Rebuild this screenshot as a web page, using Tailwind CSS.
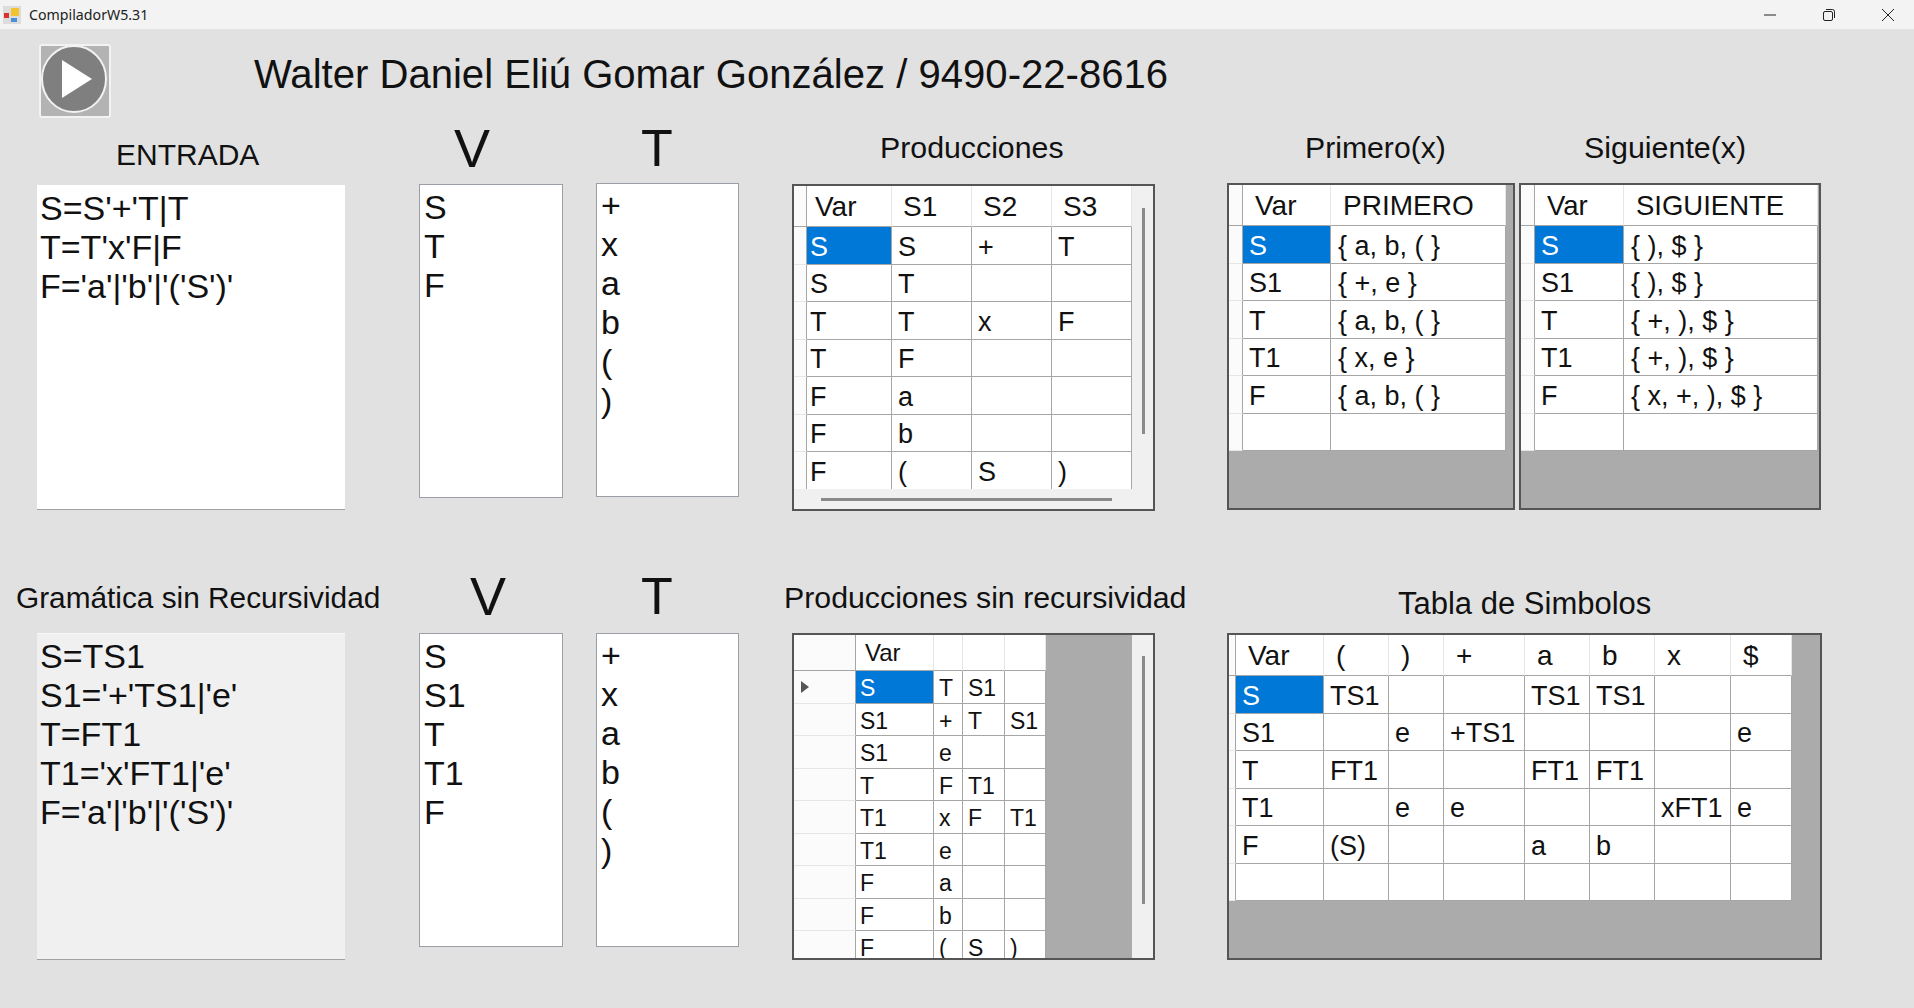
<!DOCTYPE html>
<html lang="es">
<head>
  <meta charset="UTF-8">
  <title>CompiladorW5.31</title>
  <script src="https://cdn.jsdelivr.net/npm/@tailwindcss/browser@4"></script>
</head>
<body class="bg-[#e1e1e1] w-[1914px] h-[1008px] overflow-hidden font-['Liberation_Sans',sans-serif] text-[#111]">

  <!-- barra de titulo -->
  <div class="h-[29px] bg-[#f3f3f3] flex items-center">
    <svg class="ml-[3px]" width="18" height="18" viewBox="0 0 18 18">
      <rect width="18" height="18" fill="#dcdcdc"/>
      <rect x="1" y="7" width="5" height="5" fill="#d8322a"/>
      <rect x="8" y="2" width="8" height="8" fill="#f4c430"/>
      <rect x="8" y="12" width="6" height="4" fill="#4a90d9"/>
    </svg>
    <span class="ml-[8px] text-[14.2px] font-['Noto_Sans',sans-serif] text-[#222]">CompiladorW5.31</span>
    <div class="ml-auto flex items-center mr-[20px] gap-[47px]">
      <svg width="12" height="12" viewBox="0 0 12 12"><path d="M0 6h12" stroke="#222" stroke-width="1"/></svg>
      <svg width="12" height="12" viewBox="0 0 12 12" fill="none" stroke="#222" stroke-width="1"><rect x="0.5" y="2.5" width="9" height="9" rx="1.5"/><path d="M3 0.5h6.5a2 2 0 0 1 2 2V9"/></svg>
      <svg width="12" height="12" viewBox="0 0 12 12" fill="none" stroke="#222" stroke-width="1"><path d="M0 0l12 12M12 0L0 12"/></svg>
    </div>
  </div>

  <!-- boton y nombre -->
  <div class="h-[91px] flex items-start pl-[39px] pt-[15px]">
    <button class="w-[72px] h-[74px] rounded-[3px] border-2 border-[#f2f2f2] bg-[#b3b3b3] overflow-hidden">
      <svg width="68" height="70" viewBox="0 0 68 70" class="block">
        <ellipse cx="33" cy="33" rx="32" ry="33" fill="#7f7f7f" stroke="#f2f2f2" stroke-width="2"/>
        <path d="M21 14L51 33L21 52Z" fill="#fff"/>
      </svg>
    </button>
    <h1 class="ml-[143px] text-[40.1px] leading-[60px] text-[#111]">Walter Daniel Eliú Gomar González / 9490-22-8616</h1>
  </div>

  <!-- fila superior -->
  <div class="flex items-start h-[440px]">
    <section class="ml-[37px] w-[308px]">
      <h2 class="h-[65px] pl-[79px] text-[30px] leading-[70px]">ENTRADA</h2>
      <div class="h-[325px] bg-white border-b border-[#a0a0a0] pl-[3px] pt-[4px] text-[34px] leading-[39px]">
        <p>S=S'+'T|T</p><p>T=T'x'F|F</p><p>F='a'|'b'|'('S')'</p>
      </div>
    </section>
    <section class="ml-[74px] w-[144px]">
      <h2 class="h-[64px] pl-[35px] text-[54px] leading-[56px]">V</h2>
      <div class="h-[314px] bg-white border border-[#9a9fa6] pl-[4px] pt-[3px] text-[34px] leading-[39px]">
        <p>S</p><p>T</p><p>F</p>
      </div>
    </section>
    <section class="ml-[33px] w-[143px]">
      <h2 class="h-[63px] pl-[45px] text-[52px] leading-[56px]">T</h2>
      <div class="h-[314px] bg-white border border-[#9a9fa6] pl-[4px] pt-[2px] text-[34px] leading-[39px]">
        <p>+</p><p>x</p><p>a</p><p>b</p><p>(</p><p>)</p>
      </div>
    </section>
    <section class="ml-[53px] w-[363px]">
      <h2 class="h-[64px] pl-[88px] text-[30.3px] leading-[56px] whitespace-nowrap">Producciones</h2>
      <div class="h-[327px] border-2 border-[#555] flex flex-col bg-[#f0f0f0]">
        <div class="flex flex-1 min-h-0">
          <div id="tProd" class="w-[338px] overflow-hidden bg-white"></div>
          <div class="flex-1 pl-[10px] pt-[22px]"><div class="w-[3px] h-[226px] bg-[#8a8a8a]"></div></div>
        </div>
        <div class="h-[20px] pl-[27px] pt-[9px]"><div class="w-[291px] h-[3px] bg-[#8a8a8a]"></div></div>
      </div>
    </section>
    <section class="ml-[72px] w-[288px]">
      <h2 class="h-[63px] pl-[78px] text-[30.2px] leading-[56px] whitespace-nowrap">Primero(x)</h2>
      <div id="tPrim" class="h-[327px] border-2 border-[#555] bg-[#ababab] overflow-hidden"></div>
    </section>
    <section class="ml-[4px] w-[302px]">
      <h2 class="h-[63px] pl-[65px] text-[30.4px] leading-[55px] whitespace-nowrap">Siguiente(x)</h2>
      <div id="tSig" class="h-[327px] border-2 border-[#555] bg-[#ababab] overflow-hidden"></div>
    </section>
  </div>

  <!-- fila inferior -->
  <div class="flex items-start h-[400px]">
    <section class="ml-[37px] w-[308px]">
      <h2 class="h-[73px] -ml-[21px] text-[29.8px] leading-[75px] whitespace-nowrap">Gramática sin Recursividad</h2>
      <div class="h-[327px] bg-[#f0f0f0] border-t border-[#f8f8f8] border-b-[#a0a0a0] border-b pl-[3px] pt-[3px] text-[34px] leading-[39px]">
        <p>S=TS1</p><p>S1='+'TS1|'e'</p><p>T=FT1</p><p>T1='x'FT1|'e'</p><p>F='a'|'b'|'('S')'</p>
      </div>
    </section>
    <section class="ml-[74px] w-[144px]">
      <h2 class="h-[73px] pl-[51px] text-[54px] leading-[72px]">V</h2>
      <div class="h-[314px] bg-white border border-[#9a9fa6] pl-[4px] pt-[3px] text-[34px] leading-[39px]">
        <p>S</p><p>S1</p><p>T</p><p>T1</p><p>F</p>
      </div>
    </section>
    <section class="ml-[33px] w-[143px]">
      <h2 class="h-[73px] pl-[45px] text-[52px] leading-[72px]">T</h2>
      <div class="h-[314px] bg-white border border-[#9a9fa6] pl-[4px] pt-[2px] text-[34px] leading-[39px]">
        <p>+</p><p>x</p><p>a</p><p>b</p><p>(</p><p>)</p>
      </div>
    </section>
    <section class="ml-[53px] w-[363px]">
      <h2 class="h-[73px] -ml-[8px] text-[30.3px] leading-[75px] whitespace-nowrap">Producciones sin recursividad</h2>
      <div class="h-[327px] border-2 border-[#555] flex bg-[#f0f0f0]">
        <div id="tSinRec" class="w-[338px] overflow-hidden bg-[#ababab]"></div>
        <div class="flex-1 pl-[10px] pt-[21px]"><div class="w-[3px] h-[248px] bg-[#8a8a8a]"></div></div>
      </div>
    </section>
    <section class="ml-[72px] w-[595px]">
      <h2 class="h-[73px] pl-[171px] text-[31px] leading-[88px] whitespace-nowrap">Tabla de Simbolos</h2>
      <div id="tSimb" class="h-[327px] border-2 border-[#555] bg-[#ababab] overflow-hidden"></div>
    </section>
  </div>

  <script>
    /* arma un DataGridView: ancho de fila-cabecera + columnas, filas de alto fraccional */
    function grid (id, o) {
      const cont = document.getElementById(id);
      const fila = (alto, celdas) => {
        const r = document.createElement('div');
        r.className = 'flex';
        r.style.height = alto + 'px';
        celdas.forEach(c => r.appendChild(c));
        return r;
      };
      const celda = (w, h, txt, cls, pad, font) => {
        const d = document.createElement('div');
        d.className = 'shrink-0 box-border flex items-center whitespace-nowrap overflow-hidden ' + cls;
        d.style.width = w + 'px';
        d.style.height = h + 'px';
        d.style.paddingLeft = pad + 'px';
        d.style.fontSize = font + 'px';
        d.textContent = txt;
        return d;
      };

      cont.appendChild(fila(o.headH, [
        celda(o.rowHead, o.headH, '', 'bg-[#fbfbfb] border-r border-b border-[#a6a6a6]', 0, o.font),
        ...o.head.map((t, i) =>
          celda(o.cols[i], o.headH, t, 'pt-[1px] bg-white border-r border-r-[#e6e6e6] border-b border-b-[#a6a6a6]',
                i === 0 ? o.headPad0 : o.headPad, o.headFont))
      ]));

      o.rows.forEach((row, ri) => {
        const h = Math.round((ri + 1) * o.rowH) - Math.round(ri * o.rowH);
        const cab = celda(o.rowHead, h, '', 'bg-[#fbfbfb] border-r border-r-[#a6a6a6] border-b border-b-[#e6e6e6]', 0, o.font);
        if (o.arrow && ri === 0) {
          cab.innerHTML = '<svg width="8" height="12" viewBox="0 0 8 12" class="ml-[7px]"><path d="M0 0L8 6L0 12Z" fill="#555"/></svg>';
        }
        cont.appendChild(fila(h, [cab, ...o.cols.map((w, ci) => {
          const sel = ri === 0 && ci === 0;
          return celda(w, h, row[ci] || '',
            sel ? 'pt-[3px] bg-[#0078d7] text-white border-r border-b border-[#a6a6a6]'
                : 'pt-[3px] bg-white border-r border-b border-[#a6a6a6]',
            ci === 0 ? o.cellPad0 : o.cellPad, o.font);
        })]));
      });
    }

    grid('tProd', {
      font: 27, headFont: 28, rowHead: 13, headH: 41, rowH: 37.5, headPad: 11, headPad0: 8, cellPad: 6, cellPad0: 3,
      cols: [85, 80, 80, 80],
      head: ['Var', 'S1', 'S2', 'S3'],
      rows: [['S','S','+','T'],['S','T'],['T','T','x','F'],['T','F'],['F','a'],['F','b'],['F','(','S',')'],[]]
    });

    grid('tPrim', {
      font: 27, headFont: 28, rowHead: 14, headH: 41, rowH: 37.5, headPad: 12, headPad0: 12, cellPad: 7, cellPad0: 6,
      cols: [88, 175],
      head: ['Var', 'PRIMERO'],
      rows: [['S','{ a, b, ( }'],['S1','{ +, e }'],['T','{ a, b, ( }'],['T1','{ x, e }'],['F','{ a, b, ( }'],[]]
    });

    grid('tSig', {
      font: 27, headFont: 27.5, rowHead: 14, headH: 41, rowH: 37.5, headPad: 12, headPad0: 12, cellPad: 7, cellPad0: 6,
      cols: [89, 194],
      head: ['Var', 'SIGUIENTE'],
      rows: [['S','{ ), $ }'],['S1','{ ), $ }'],['T','{ +, ), $ }'],['T1','{ +, ), $ }'],['F','{ x, +, ), $ }'],[]]
    });

    grid('tSinRec', {
      font: 23, headFont: 24, rowHead: 62, headH: 36, rowH: 32.5, headPad: 9, headPad0: 9, cellPad: 5, cellPad0: 4, arrow: true,
      cols: [78, 29, 42, 41],
      head: ['Var', '', '', ''],
      rows: [['S','T','S1'],['S1','+','T','S1'],['S1','e'],['T','F','T1'],['T1','x','F','T1'],['T1','e'],['F','a'],['F','b'],['F','(','S',')']]
    });

    grid('tSimb', {
      font: 27, headFont: 28, rowHead: 7, headH: 41, rowH: 37.5, headPad: 12, headPad0: 12, cellPad: 6, cellPad0: 6,
      cols: [88, 65, 55, 81, 65, 65, 76, 61],
      head: ['Var', '(', ')', '+', 'a', 'b', 'x', '$'],
      rows: [
        ['S','TS1','','','TS1','TS1'],
        ['S1','','e','+TS1','','','','e'],
        ['T','FT1','','','FT1','FT1'],
        ['T1','','e','e','','','xFT1','e'],
        ['F','(S)','','','a','b'],
        []
      ]
    });
  </script>
</body>
</html>
